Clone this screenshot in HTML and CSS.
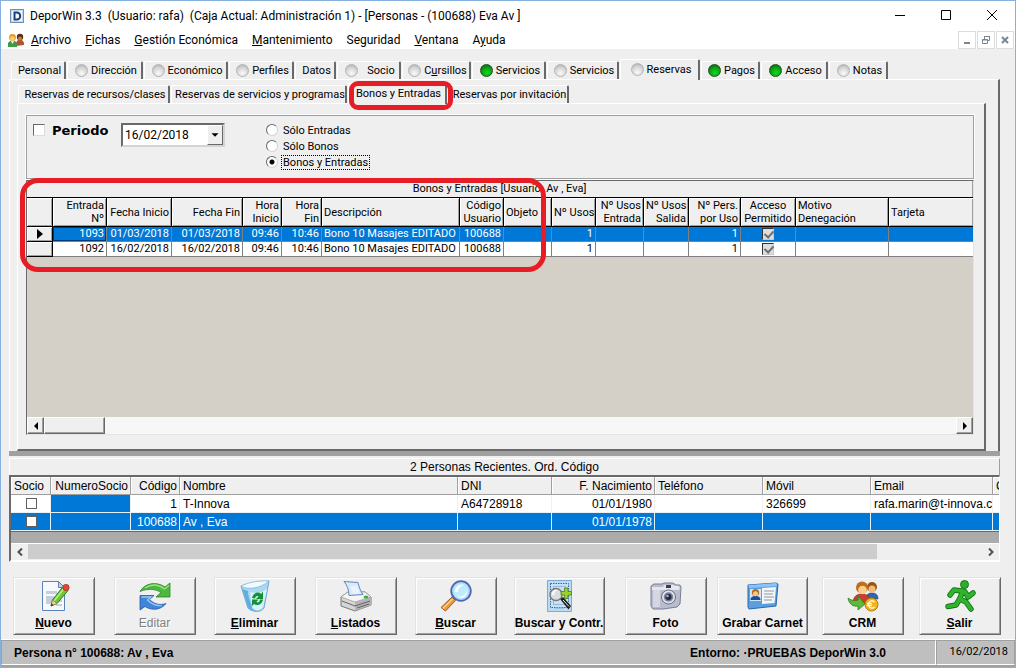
FILE: index.html
```html
<!DOCTYPE html>
<html lang="es">
  <head>
    <meta charset="utf-8">
    <title>DeporWin 3.3</title>
    <link rel="stylesheet" href="styles.css">
  </head>
  <body>
  <div class="window">
    <header class="title-bar">
      <svg class="app-icon" viewBox="0 0 14 14">
        <rect x="0.5" y="0.5" width="13" height="13" fill="#c9d9ec" stroke="#6f8fb8"/>
        <rect x="2" y="2" width="10" height="10" fill="#f4f8fc"/>
        <path d="M4.5 3.5h2.5a3.2 3.5 0 0 1 0 7H4.500z" fill="none" stroke="#1d3f7a" stroke-width="2"/>
      </svg>
      <h1>DeporWin 3.3 &nbsp;(Usuario: rafa) &nbsp;(Caja Actual: Administración 1) - [Personas - (100688) Eva Av ]</h1>
      <div class="window-buttons">
        <button aria-label="Minimizar"><svg viewBox="0 0 12 12"><path d="M1 6.500h10" stroke="#000" fill="none"/></svg></button>
        <button aria-label="Maximizar"><svg viewBox="0 0 12 12"><path d="M1.500 1.500h9v9h-9z" stroke="#000" fill="none"/></svg></button>
        <button aria-label="Cerrar"><svg viewBox="0 0 12 12"><path d="M1 1l10 10M11 1L1 11" stroke="#000" fill="none"/></svg></button>
      </div>
    </header>

    <nav class="menu-bar">
      <svg class="menu-icon" viewBox="0 0 16 14">
        <path d="M8 13V9.500L10 7h4l2 2.500V12z" fill="#b5542a"/>
        <circle cx="12" cy="4" r="3.200" fill="#5a2f14"/>
        <circle cx="12" cy="5.500" r="2" fill="#c77b45"/>
        <path d="M0 14v-4l2-2h5l2 2v4z" fill="#3f9b46"/>
        <path d="M3 8h3l-1.500 3z" fill="#fff"/>
        <circle cx="4.500" cy="4.500" r="3.400" fill="#e39b1e"/>
        <circle cx="4.500" cy="5.500" r="2.300" fill="#f7cf74"/>
      </svg>
      <a href="#"><u>A</u>rchivo</a>
      <a href="#"><u>F</u>ichas</a>
      <a href="#"><u>G</u>estión Económica</a>
      <a href="#"><u>M</u>antenimiento</a>
      <a href="#">Se<u>g</u>uridad</a>
      <a href="#"><u>V</u>entana</a>
      <a href="#">A<u>y</u>uda</a>
      <div class="mdi-buttons">
        <button aria-label="Minimizar ficha"><svg viewBox="0 0 10 10"><path d="M2 8h6" stroke="#7a868f" stroke-width="2" fill="none"/></svg></button>
        <button aria-label="Restaurar ficha"><svg viewBox="0 0 10 10"><path d="M3.500 4V1.500h5v4H7M3 1.500h6M1.500 4.500h5v4h-5zM1 5h6" stroke="#7a868f" fill="none"/></svg></button>
        <button aria-label="Cerrar ficha"><svg viewBox="0 0 10 10"><path d="M2 2l6 6M8 2L2 8" stroke="#7a868f" stroke-width="2" fill="none"/></svg></button>
      </div>
    </nav>

    <main class="workspace">
      <div class="tabs main-tabs">
        <button class="tab">Personal</button>
        <button class="tab"><span class="led"></span>Dirección</button>
        <button class="tab"><span class="led"></span>Económico</button>
        <button class="tab"><span class="led"></span>Perfiles</button>
        <button class="tab">Datos</button>
        <button class="tab spaced"><span class="led"></span>Socio</button>
        <button class="tab"><span class="led"></span><span>C<u>u</u>rsillos</span></button>
        <button class="tab"><span class="led on"></span>Servicios</button>
        <button class="tab"><span class="led"></span>Servicios</button>
        <button class="tab active"><span class="led"></span>Reservas</button>
        <button class="tab"><span class="led on"></span>Pagos</button>
        <button class="tab"><span class="led on"></span>Acceso</button>
        <button class="tab"><span class="led"></span>Notas</button>
      </div>

      <section class="page">
        <div class="tabs sub-tabs">
          <button class="tab">Reservas de recursos/clases</button>
          <button class="tab">Reservas de servicios y programas</button>
          <button class="tab active">Bonos y Entradas<span class="mark mark-tab"></span></button>
          <button class="tab">Reservas por invitación</button>
        </div>

        <div class="sub-page">
          <div class="filters">
            <label class="period"><input type="checkbox" class="sunken-check">Periodo</label>
            <div class="combo">
              <select aria-label="Fecha"><option>16/02/2018</option></select>
              <svg class="combo-arrow" viewBox="0 0 16 20"><path d="M4 8h8l-4 4z" fill="#000"/></svg>
            </div>
            <div class="options">
              <label><input type="radio" name="tipo"><span>Sólo Entradas</span></label>
              <label><input type="radio" name="tipo"><span>Sólo Bonos</span></label>
              <label><input type="radio" name="tipo" checked><span class="focused">Bonos y Entradas</span></label>
            </div>
          </div>

          <div class="grid">
            <span class="mark mark-grid"></span>
            <div class="grid-title">Bonos y Entradas [Usuario: Av , Eva]</div>
            <div class="grid-body">
              <table class="passes">
                <colgroup>
                  <col class="c-sel"><col class="c-num"><col class="c-start"><col class="c-end"><col class="c-hour"><col class="c-hour2">
                  <col class="c-desc"><col class="c-code"><col class="c-obj"><col class="c-uses"><col class="c-in"><col class="c-out">
                  <col class="c-pers"><col class="c-ok"><col class="c-reason"><col>
                </colgroup>
                <thead>
                  <tr>
                    <th></th>
                    <th class="r">Entrada<br>Nº</th>
                    <th class="r">Fecha Inicio</th>
                    <th class="r">Fecha Fin</th>
                    <th class="r">Hora<br>Inicio</th>
                    <th class="r">Hora<br>Fin</th>
                    <th>Descripción</th>
                    <th class="r">Código<br>Usuario</th>
                    <th>Objeto</th>
                    <th class="r">Nº Usos</th>
                    <th class="r">Nº Usos<br>Entrada</th>
                    <th class="r">Nº Usos<br>Salida</th>
                    <th class="r">Nº Pers.<br>por Uso</th>
                    <th class="c">Acceso<br>Permitido</th>
                    <th>Motivo<br>Denegación</th>
                    <th>Tarjeta</th>
                  </tr>
                </thead>
                <tbody>
                  <tr class="selected">
                    <td class="selector"><svg viewBox="0 0 6 10"><path d="M0 0l6 5-6 5z" fill="#000"/></svg></td>
                    <td class="r current">1093</td>
                    <td class="r">01/03/2018</td>
                    <td class="r">01/03/2018</td>
                    <td class="r">09:46</td>
                    <td class="r">10:46</td>
                    <td>Bono 10 Masajes EDITADO</td>
                    <td class="r">100688</td>
                    <td></td>
                    <td class="r">1</td>
                    <td></td>
                    <td></td>
                    <td class="r">1</td>
                    <td class="c"><input type="checkbox" class="grey-check" aria-label="Acceso permitido 1093" checked></td>
                    <td></td>
                    <td></td>
                  </tr>
                  <tr>
                    <td class="selector"></td>
                    <td class="r">1092</td>
                    <td class="r">16/02/2018</td>
                    <td class="r">16/02/2018</td>
                    <td class="r">09:46</td>
                    <td class="r">10:46</td>
                    <td>Bono 10 Masajes EDITADO</td>
                    <td class="r">100688</td>
                    <td></td>
                    <td class="r">1</td>
                    <td></td>
                    <td></td>
                    <td class="r">1</td>
                    <td class="c"><input type="checkbox" class="grey-check" aria-label="Acceso permitido 1092" checked></td>
                    <td></td>
                    <td></td>
                  </tr>
                </tbody>
              </table>
            </div>
            <div class="scroll-classic">
              <button aria-label="Desplazar a la izquierda"><svg viewBox="0 0 4 8"><path d="M4 0v8L0 4z" fill="#000"/></svg></button>
              <div class="thumb"></div>
              <button class="end" aria-label="Desplazar a la derecha"><svg viewBox="0 0 4 8"><path d="M0 0v8l4-4z" fill="#000"/></svg></button>
            </div>
          </div>
        </div>
      </section>

      <div class="splitter"></div>

      <section class="recent">
        <div class="recent-title">2 Personas Recientes. Ord. Código</div>
        <div class="recent-body">
          <table class="people">
            <colgroup>
              <col class="p-member"><col class="p-number"><col class="p-code"><col class="p-name"><col class="p-dni">
              <col class="p-birth"><col class="p-phone"><col class="p-phone"><col class="p-mail"><col>
            </colgroup>
            <thead>
              <tr>
                <th>Socio</th>
                <th class="r cut">NumeroSocio</th>
                <th class="r">Código</th>
                <th>Nombre</th>
                <th>DNI</th>
                <th class="r">F. Nacimiento</th>
                <th>Teléfono</th>
                <th>Móvil</th>
                <th>Email</th>
                <th>C</th>
              </tr>
            </thead>
            <tbody>
              <tr>
                <td class="c"><input type="checkbox" class="flat-check" aria-label="Socio T-Innova"></td>
                <td class="blue"></td>
                <td class="r">1</td>
                <td>T-Innova</td>
                <td>A64728918</td>
                <td class="r">01/01/1980</td>
                <td></td>
                <td>326699</td>
                <td>rafa.marin@t-innova.com</td>
                <td></td>
              </tr>
              <tr class="selected">
                <td class="c"><input type="checkbox" class="flat-check" aria-label="Socio Av , Eva"></td>
                <td></td>
                <td class="r">100688</td>
                <td>Av , Eva</td>
                <td></td>
                <td class="r">01/01/1978</td>
                <td></td>
                <td></td>
                <td></td>
                <td></td>
              </tr>
            </tbody>
          </table>
          <div class="recent-empty"></div>
          <div class="scroll-flat">
            <button aria-label="Anterior"><svg viewBox="0 0 6 8"><path d="M5 0.500L1.500 4 5 7.500" stroke="#505050" stroke-width="2" fill="none"/></svg></button>
            <div class="track"><div class="thumb"></div></div>
            <button aria-label="Siguiente"><svg viewBox="0 0 6 8"><path d="M1 0.500L4.500 4 1 7.500" stroke="#505050" stroke-width="2" fill="none"/></svg></button>
          </div>
        </div>
      </section>
    </main>

    <div class="toolbar">
      <button>
        <svg viewBox="0 0 32 32">
          <path d="M4.500 1.500h16l6 6v23h-22z" fill="#f5f9fd" stroke="#5b83b5"/>
          <path d="M20.500 1.500v6h6z" fill="#bcd3ea" stroke="#5b83b5"/>
          <path d="M8 11h11v3H8zM8 16h8v8H8zM18 20h6v2h-6zM18 24h6v2h-6z" fill="#c5cfdc"/>
          <path d="M13 26l1.500-6L25 6.500l5 4L19 23.500z" fill="#6cc83a" stroke="#2d7d1c"/>
          <path d="M16 21L26.500 8" stroke="#b6ee86" stroke-width="1.500"/>
          <path d="M13 26l1.500-6 4.500 3.500z" fill="#f3d59b" stroke="#8a6a34" stroke-width=".6"/>
          <path d="M13 26l.6-2.400 1.700 1.400z" fill="#222"/>
          <circle cx="28" cy="7.500" r="3.200" fill="#df4635" stroke="#a52a1e" stroke-width=".6"/>
        </svg>
        <span><u>N</u>uevo</span>
      </button>
      <button class="off">
        <svg viewBox="0 0 32 32">
          <path d="M1 11.500C6 3 17 1 26 7l5-4v14H17l5-4.500c-6-4-14-4-21-1z" fill="#4db83e" stroke="#2c8330" stroke-width=".8"/>
          <path d="M6 8c6-4 13-4 19.500 1L30 5.500" stroke="#9be386" stroke-width="1.300" fill="none"/>
          <path d="M27 23.500C22 30 13 31 6 26.500l-5 3.500V15.500h14l-4.500 4c5 5 11 6 16.500 4z" fill="#3f86d8" stroke="#27589d" stroke-width=".8"/>
          <path d="M2.500 17H12l-3.500 3c4 4 9 6 14 5.500" stroke="#9cc8f5" stroke-width="1.300" fill="none"/>
        </svg>
        <span>Editar</span>
      </button>
      <button>
        <svg viewBox="0 0 32 32">
          <path d="M2 6l11-3 17-2-5 27c-3 5-13 4-16 0z" fill="#a9d8f3" stroke="#6ba8cf"/>
          <path d="M2 6c6 4 19 3 28-5-10-.5-20 1-28 5z" fill="#f0faff" stroke="#7fb6d8" stroke-width=".8"/>
          <path d="M3.500 9l5.500 18c3 4 7 4 9 3-6-4-9-12-9-19z" fill="#439bd8" opacity=".7"/>
          <path d="M11 12c5 1.500 11 1 17-3l-4 18c-3 4-9 4-11 1z" fill="#e5f6fd" opacity=".85"/>
          <path d="M13 18c1-5 6-7 9-4l2-2.500V19h-7l2.500-2.500c-1.500-1-3 0-3.500 2zM24 19.500c-.5 5-6 7-9 4.500l-2 2V19.500h6.500L17.500 22c2 1 3 0 3.500-2.500z" fill="#139338"/>
        </svg>
        <span><u>E</u>liminar</span>
      </button>
      <button>
        <svg viewBox="0 0 32 32">
          <path d="M1 17l7-5h17l6 5v8l-16 6L1 26z" fill="#d5d5d5" stroke="#777"/>
          <path d="M1 17l14 5 16-5-6-5H8z" fill="#f5f5f5" stroke="#999" stroke-width=".7"/>
          <path d="M15 22v9l16-6v-8z" fill="#b4b4b4"/>
          <path d="M4 1.500l14 1c1 4 2 8 5 12l-14 1C9 10 7 5 4 1.500z" fill="#d7e9fb" stroke="#6288bd"/>
          <path d="M10 6l7-.5c1 3 1.500 5 3 8l-7 .5z" fill="#fff" opacity=".5"/>
          <path d="M2 21l13 5 15-5M17 28l12-4" stroke="#666" fill="none"/>
          <ellipse cx="26" cy="17" rx="2.500" ry="1.600" fill="#41ad44"/>
        </svg>
        <span><u>L</u>istados</span>
      </button>
      <button>
        <svg viewBox="0 0 32 32">
          <path d="M12 17l3.500 3.500L5.500 31 1 27.500z" fill="#e69a3c" stroke="#a35d2b"/>
          <path d="M12.500 19L3 28.500" stroke="#f9cf8a" stroke-width="1.500"/>
          <path d="M12 17l3-2 2.500 2.500-2 3z" fill="#8a79bc"/>
          <circle cx="21" cy="11" r="9.800" fill="#a9dcf8" stroke="#5367b1" stroke-width="1.800"/>
          <circle cx="21" cy="11" r="7.500" fill="#c0ebfd"/>
          <path d="M15 12c0-5 4-8 9-7-4 1-6 3-6 7z" fill="#fff"/>
          <path d="M17 16c4 2 9-1 10-6 1 6-5 11-10 6z" fill="#f0fcff"/>
        </svg>
        <span><u>B</u>uscar</span>
      </button>
      <button class="tight">
        <svg viewBox="0 0 32 32">
          <path d="M4.500.5h24v31h-24z" fill="#bcdaf1" stroke="#7ea9d0"/>
          <path d="M7.500 3.500h18v24h-18z" fill="#c9e1f4" stroke="#39689d" stroke-dasharray="1.500 1"/>
          <path d="M10.500 6.500h12v18h-12z" fill="none" stroke="#5c8fc0" stroke-dasharray="1 1"/>
          <path d="M17 19l3-2 8 9-2.500 3.500z" fill="#1b1b1b"/>
          <path d="M20 20l6 6.500" stroke="#eee"/>
          <circle cx="13" cy="14.500" r="6" fill="#d9dee3" stroke="#777" stroke-width="1.400"/>
          <path d="M9 15c0-4 3-6 6-5-3 1-4 2-4 5z" fill="#fff"/>
          <path d="M21.500 8h3.500v3.500h3.500V15H25v3.500h-3.500V15H18v-3.500h3.500z" fill="#9bd32c" stroke="#497d17" stroke-width=".8"/>
          <path d="M12 28h9" stroke="#7ea9d0"/>
        </svg>
        <span>Buscar y Contr.</span>
      </button>
      <button>
        <svg viewBox="0 0 32 32">
          <path d="M1 6l3-2h8l2-1h9l3 2h4l1 2-1 17-3 3-14 2H3l-2-3z" fill="#b9bccd" stroke="#7b7d94"/>
          <path d="M2 7h11l1-2h9l2 2h5l-1 3H2z" fill="#e4e5ee"/>
          <path d="M3 10h7v17H3z" fill="#d4d6e2"/>
          <path d="M16 5h5v3h-5z" fill="#3c3d4c"/>
          <path d="M24 7l1.500-1 1.500 1 1.500-1" stroke="#fff" fill="none"/>
          <circle cx="18.500" cy="17" r="7" fill="#dfe0e8" stroke="#6d6f85"/>
          <circle cx="18.500" cy="17" r="4.700" fill="#7b7f99"/>
          <circle cx="18.500" cy="17" r="3" fill="#23283e"/>
          <circle cx="17.500" cy="16" r="1.300" fill="#93b8e2"/>
        </svg>
        <span>Foto</span>
      </button>
      <button class="tight">
        <svg viewBox="0 0 32 32">
          <path d="M1 5l28-2 2 1-2 22-27 3-1-2z" fill="#5b9fe0" stroke="#2868ad"/>
          <path d="M1.500 5l28-2 .5 3L2 8z" fill="#8dc4f5"/>
          <path d="M3 9h11v12H3z" fill="#d0e7fb"/>
          <path d="M15 8l14-1-1.500 16L15 24z" fill="#f5f6f8"/>
          <path d="M17 11h10M17 14h9M17 17h10M17 20h8" stroke="#8e98a5" fill="none"/>
          <path d="M3.500 20c0-3 2-4 5-4s5 1 5 4z" fill="#1e4e95"/>
          <circle cx="8.500" cy="12.500" r="3.600" fill="#bb6a15"/>
          <circle cx="8.500" cy="13.800" r="2.500" fill="#f9c984"/>
        </svg>
        <span>Grabar Carnet</span>
      </button>
      <button>
        <svg viewBox="0 0 32 32">
          <path d="M19 19c0-5 3-6 6-6s6 1 6 6z" fill="#2f67b1" stroke="#1d4481" stroke-width=".6"/>
          <circle cx="25" cy="7" r="5" fill="#9c5316"/>
          <circle cx="25" cy="9" r="3.500" fill="#f0bd78"/>
          <path d="M6 24c0-8 4-10 9-10s8 2 8 10z" fill="#d13c2a" stroke="#8d2018" stroke-width=".6"/>
          <circle cx="15" cy="7.500" r="6" fill="#bf6d18"/>
          <circle cx="15.500" cy="10" r="4.300" fill="#f8cf8d"/>
          <path d="M1 18c4 3 7 3 10 2v-4l7 8-7 6v-4C6 27 2 24 1 18z" fill="#5cba3c" stroke="#2c7b20" stroke-width=".8"/>
          <circle cx="24.500" cy="24.500" r="6.500" fill="#f0b421" stroke="#b27f10"/>
          <path d="M27.500 22a3.500 3.500 0 1 0 0 5M20 23.700h5M20 25.500h5" stroke="#fff" stroke-width="1.200" fill="none"/>
        </svg>
        <span>CRM</span>
      </button>
      <button>
        <svg viewBox="0 0 32 32">
          <g fill="none" stroke="#167619" stroke-width="5.500" stroke-linejoin="round" stroke-linecap="round">
            <path d="M19 11l-4 9-3 5-8 1.500M16 19l6 3 5 7M18 11l-8-1-4 5M21 12l3 5 5-4"/>
          </g>
          <circle cx="20.500" cy="4.500" r="4" fill="#2fae2c" stroke="#167619"/>
          <g fill="none" stroke="#31b42d" stroke-width="3.700" stroke-linejoin="round" stroke-linecap="round">
            <path d="M19 11l-4 9-3 5-8 1.500M16 19l6 3 5 7M18 11l-8-1-4 5M21 12l3 5 5-4"/>
          </g>
        </svg>
        <span><u>S</u>alir</span>
      </button>
    </div>

    <footer class="status-bar">
      <div class="status-main">
        <span>Persona n° 100688: Av , Eva</span>
        <span class="environment">Entorno: ·PRUEBAS DeporWin 3.0</span>
      </div>
      <div class="status-date">16/02/2018</div>
    </footer>
  </div>
  </body>
</html>
```
FILE: styles.css
```css
:root {
  --face: #efefef;
  --light: #ffffff;
  --shadow: #a0a0a0;
  --dark: #696969;
  --select: #0078d7;
  --ring: #e81c24;
  --ui: Roboto, "Liberation Sans", sans-serif;
}

* {
  margin: 0;
  padding: 0;
  box-sizing: border-box;
}

body {
  min-height: 100vh;
  display: flex;
  padding-bottom: 1px;
  background: var(--light);
  color: #000;
  font-family: var(--ui);
  font-size: 11px;
}

button,
select,
input {
  font: inherit;
  color: inherit;
}

button {
  background: none;
  border: none;
}

.window {
  flex: 1;
  min-width: 0;
  display: flex;
  flex-direction: column;
  border: 1px solid #86b0dd;
  background: var(--face);
}

/* title and menu */
.title-bar {
  display: flex;
  align-items: center;
  height: 30px;
  padding-left: 9px;
  background: var(--light);
}

.title-bar h1 {
  flex: 1;
  font-size: 12px;
  font-weight: 400;
  white-space: nowrap;
}

.app-icon {
  width: 14px;
  height: 14px;
  margin-right: 6px;
}

.window-buttons {
  display: flex;
}

.window-buttons button {
  width: 46px;
  height: 28px;
}

.window-buttons svg {
  width: 12px;
  height: 12px;
}

.menu-bar {
  display: flex;
  align-items: center;
  gap: 14px;
  height: 18px;
  padding-left: 7px;
  background: var(--light);
  font-size: 12px;
}

.menu-icon {
  width: 16px;
  height: 14px;
  margin-right: -7px;
}

.menu-bar a {
  color: #000;
  text-decoration: none;
  white-space: nowrap;
}

.mdi-buttons {
  display: flex;
  gap: 1px;
  margin-left: auto;
  align-self: flex-start;
  padding-right: 1px;
}

.mdi-buttons button {
  width: 18px;
  height: 18px;
  border: 1px solid #dcdcdc;
  background: var(--light);
}

.mdi-buttons svg {
  display: block;
  width: 10px;
  height: 10px;
  margin: 0 auto;
}

/* tabs */
.workspace {
  flex: 1;
  display: flex;
  flex-direction: column;
  padding: 10px 15px 0 8px;
}

.tabs {
  display: grid;
  align-items: end;
}

.main-tabs {
  grid-template-columns: 56px 77px 85px 66px 42px 65px 70px 75px 73px 81px 60px 68px 60px;
  padding-left: 2px;
}

.sub-tabs {
  grid-template-columns: 153px 177px 100px 122px;
  padding-left: 1px;
}

.tab {
  display: flex;
  align-items: center;
  justify-content: center;
  gap: 3px;
  height: 18px;
  margin-right: 1px;
  padding-left: 3px;
  border-top: 1px solid var(--light);
  border-left: 1px solid var(--light);
  border-right: 2px solid var(--dark);
  border-radius: 2px 2px 0 0;
  white-space: nowrap;
}

.tab.spaced {
  gap: 9px;
}

.tab.active {
  position: relative;
  z-index: 1;
  height: 21px;
  margin-bottom: -1px;
  padding-bottom: 1px;
  background: var(--face);
}

.led {
  width: 13px;
  height: 13px;
  border-radius: 50%;
  border: 1px solid #b4b4b4;
  background: radial-gradient(circle at 50% 75%, #fafafa, #d2d2d2 60%, #a5a5a5);
}

.led.on {
  border-color: #1f4d20;
  background: radial-gradient(circle at 55% 70%, #0fdc1c, #0aa514 50%, #12491a);
}

.page {
  flex: 1;
  display: flex;
  flex-direction: column;
  padding: 3px 12px 0 7px;
  border-top: 1px solid var(--light);
  border-left: 1px solid var(--light);
  border-right: 2px solid var(--dark);
}

.sub-page {
  flex: 1;
  display: flex;
  flex-direction: column;
  padding: 11px 10px 14px 8px;
  border: 1px solid var(--light);
  border-right: 2px solid var(--dark);
  border-bottom: 2px solid var(--dark);
}

/* filters */
.filters {
  display: flex;
  align-items: flex-start;
  height: 64px;
  padding: 6px 6px 0;
  border: 1px solid var(--shadow);
  outline: 1px solid var(--light);
}

.period {
  display: flex;
  gap: 7px;
  width: 88px;
  font: bold 13px/18px "DejaVu Sans", sans-serif;
}

.sunken-check {
  appearance: none;
  width: 12px;
  height: 12px;
  margin-top: 2px;
  background: var(--light);
  border: 1px solid var(--dark);
  border-right-color: #dcdcdc;
  border-bottom-color: #dcdcdc;
}

.combo {
  position: relative;
  width: 104px;
  height: 24px;
  margin-top: 1px;
  border: 2px solid var(--dark);
  border-right-color: #d4d4d4;
  border-bottom-color: #d4d4d4;
  background: var(--light);
}

.combo select {
  appearance: none;
  width: 100%;
  height: 20px;
  padding-left: 2px;
  border: none;
  background: transparent;
  font-size: 12px;
}

.combo-arrow {
  position: absolute;
  top: 0;
  right: 0;
  width: 16px;
  height: 20px;
  background: var(--face);
  border: 1px solid var(--light);
  border-right-color: var(--dark);
  border-bottom-color: var(--dark);
  pointer-events: none;
}

.options {
  display: flex;
  flex-direction: column;
  margin-left: 41px;
}

.options label {
  display: flex;
  align-items: center;
  gap: 4px;
  height: 16px;
}

.options input {
  appearance: none;
  width: 12px;
  height: 12px;
  border: 1px solid var(--dark);
  border-right-color: #d4d4d4;
  border-bottom-color: #d4d4d4;
  border-radius: 50%;
  background: var(--light);
}

.options input:checked {
  background: radial-gradient(circle, #000 2px, #fff 3px);
}

.options span {
  padding: 0 1px;
  line-height: 13px;
}

.options .focused {
  outline: 1px dotted #000;
}

/* passes grid */
.grid {
  position: relative;
  flex: 1;
  display: flex;
  flex-direction: column;
  margin-top: 1px;
  border: 1px solid var(--dark);
  border-right-color: #e3e3e3;
  border-bottom-color: #e3e3e3;
}

.grid-title {
  height: 16px;
  line-height: 16px;
  text-align: center;
  border-right: 1px solid var(--shadow);
}

.grid-body {
  flex: 1;
  min-height: 220px;
  overflow: hidden;
  background: #d4d0c8;
}

table {
  width: 100%;
  table-layout: fixed;
  border-spacing: 0;
}

th,
td {
  overflow: hidden;
  text-align: left;
  font-weight: 400;
  white-space: nowrap;
}

th.r,
td.r {
  text-align: right;
}

th.c,
td.c {
  text-align: center;
}

.passes th {
  height: 30px;
  padding: 0 2px;
  line-height: 13px;
  background: var(--face);
  border-top: 1px solid #000;
  border-right: 1px solid #000;
  border-bottom: 1px solid #000;
  box-shadow: inset 1px 1px var(--light), inset -1px -1px var(--shadow);
}

.passes td {
  height: 15px;
  padding: 0 2px;
  line-height: 14px;
  background: var(--light);
  border-right: 1px solid #808080;
  border-bottom: 1px solid #808080;
}

.passes th:last-child,
.passes td:last-child {
  border-right: none;
}

.passes .selected td {
  background: var(--select);
  color: var(--light);
}

.passes .current {
  box-shadow: inset 0 0 0 1px #003a75;
}

.passes .selector,
.passes .selected .selector {
  text-align: center;
  background: var(--face);
  border-color: #000;
  box-shadow: inset 1px 1px var(--light), inset -1px -1px var(--shadow);
}

.selector svg {
  display: block;
  width: 6px;
  height: 10px;
  margin: 0 auto;
}

.c-sel { width: 26px; }
.c-num { width: 54px; }
.c-start { width: 65px; }
.c-end { width: 71px; }
.c-hour { width: 39px; }
.c-hour2 { width: 40px; }
.c-desc { width: 138px; }
.c-code { width: 44px; }
.c-obj { width: 48px; }
.c-uses { width: 44px; }
.c-in { width: 48px; }
.c-out { width: 45px; }
.c-pers { width: 52px; }
.c-ok { width: 55px; }
.c-reason { width: 93px; }

.grey-check {
  appearance: none;
  display: block;
  width: 12px;
  height: 12px;
  margin: 0 auto;
  border: 1px solid #333;
  border-right-color: #c8c8c8;
  border-bottom-color: #c8c8c8;
  background: #dedede;
}

.grey-check:checked::before {
  content: "";
  display: block;
  width: 4px;
  height: 7px;
  margin: 0 3px;
  border: solid #707070;
  border-width: 0 2px 2px 0;
  transform: rotate(42deg);
}

.scroll-classic {
  display: flex;
  height: 17px;
  background: #f7f7f7;
}

.scroll-classic button,
.scroll-classic .thumb {
  width: 17px;
  background: var(--face);
  border: 1px solid var(--light);
  border-right: 1px solid var(--dark);
  border-bottom: 1px solid var(--dark);
  box-shadow: inset -1px -1px var(--shadow);
}

.scroll-classic .thumb {
  width: 61px;
}

.scroll-classic .end {
  margin-left: auto;
}

.scroll-classic svg {
  display: block;
  width: 4px;
  height: 8px;
  margin: 0 auto;
}

.splitter {
  height: 5px;
  background: var(--shadow);
}

/* recent people */
.recent {
  margin-top: 2px;
  font-family: "Liberation Sans", Arial, sans-serif;
  font-size: 12px;
}

.recent-title {
  height: 17px;
  line-height: 17px;
  text-align: center;
  border-top: 1px solid var(--light);
  border-left: 1px solid var(--light);
  border-right: 1px solid var(--shadow);
}

.recent-body {
  border-top: 2px solid var(--dark);
  border-left: 2px solid var(--dark);
  border-right: 1px solid var(--light);
  border-bottom: 2px solid var(--light);
}

.people th {
  height: 18px;
  padding: 0 2px 0 3px;
  background: var(--face);
  border-right: 1px solid var(--shadow);
  border-bottom: 1px solid var(--shadow);
  box-shadow: inset 1px 1px var(--light);
}

.people .cut {
  direction: rtl;
}

.people td {
  height: 18px;
  padding: 0 2px 0 3px;
  background: var(--light);
  border-right: 1px solid var(--face);
  border-bottom: 1px solid var(--face);
}

.people .selected td,
.people td.blue {
  background: var(--select);
  color: var(--light);
}

.people .selected td {
  border-color: #e6f3fb;
}

.people tr > :last-child {
  border-right: none;
}

.p-member { width: 40px; }
.p-number { width: 80px; }
.p-code { width: 49px; }
.p-name { width: 278px; }
.p-dni { width: 94px; }
.p-birth { width: 103px; }
.p-phone { width: 108px; }
.p-mail { width: 122px; }

.flat-check {
  appearance: none;
  display: block;
  width: 11px;
  height: 11px;
  margin: 0 auto;
  border: 1px solid #606060;
  background: var(--light);
}

.recent-empty {
  height: 12px;
  background: #ababab;
  border-top: 1px solid var(--dark);
}

.scroll-flat {
  display: flex;
  height: 17px;
  border-top: 1px solid var(--light);
}

.scroll-flat button {
  width: 17px;
}

.scroll-flat svg {
  display: block;
  width: 6px;
  height: 8px;
  margin: 0 auto;
}

.scroll-flat .track {
  flex: 1;
}

.scroll-flat .thumb {
  width: 89%;
  height: 15px;
  background: #cdcdcd;
}

/* toolbar */
.toolbar {
  display: grid;
  grid-template-columns: 101fr 101fr 99fr 103fr 97fr 110fr 103fr 91fr 109fr 85fr;
  justify-items: center;
  padding: 15px 13px 4px 2px;
}

.toolbar button {
  display: flex;
  flex-direction: column;
  align-items: center;
  gap: 4px;
  width: 82px;
  height: 58px;
  padding-top: 2px;
  border: 1px solid #e3e3e3;
  border-right: 1px solid var(--dark);
  border-bottom: 1px solid var(--dark);
  box-shadow: inset 1px 1px var(--light), inset -1px -1px var(--shadow);
  font-family: "Liberation Sans", Arial, sans-serif;
  font-size: 12px;
  font-weight: 700;
  white-space: nowrap;
}

.toolbar .tight {
  width: 91px;
}

.toolbar .off {
  color: #808080;
  font-weight: 400;
  text-shadow: 1px 1px var(--light);
}

.toolbar svg {
  width: 32px;
  height: 32px;
}

/* status bar */
.status-bar {
  display: flex;
  height: 28px;
  border-top: 1px solid var(--light);
  border-bottom: 2px solid var(--shadow);
  background: #bfbfbf;
}

.status-main {
  flex: 1;
  display: flex;
  align-items: center;
  justify-content: space-between;
  padding: 0 49px 0 12px;
  border: 1px solid var(--shadow);
  border-right-color: var(--light);
  border-bottom-color: var(--light);
  font: bold 12px "Liberation Sans", Arial, sans-serif;
}

.status-date {
  width: 79px;
  padding-right: 6px;
  line-height: 22px;
  text-align: right;
  border: 1px solid var(--shadow);
  border-bottom-color: var(--light);
}

/* red highlights drawn over the tab and the grid */
.mark {
  position: absolute;
  z-index: 2;
  border: 5px solid var(--ring);
  pointer-events: none;
}

.mark-tab {
  inset: -3px -8px -6px 0;
  border-radius: 9px;
}

.mark-grid {
  top: -3px;
  left: -7px;
  width: 526px;
  height: 94px;
  border-radius: 18px;
}
```
